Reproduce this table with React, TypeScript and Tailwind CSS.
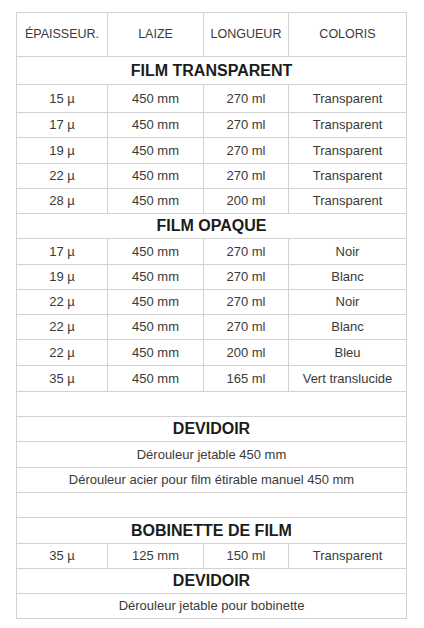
import React from "react";

type Row =
  | { kind: "data"; cells: [string, string, string, string]; h: number }
  | { kind: "title"; text: string; h: number }
  | { kind: "span"; text: string; h: number }
  | { kind: "empty"; h: number };

const rows: Row[] = [
  { kind: "title", text: "FILM TRANSPARENT", h: 28 },
  { kind: "data", cells: ["15 µ", "450 mm", "270 ml", "Transparent"], h: 28 },
  { kind: "data", cells: ["17 µ", "450 mm", "270 ml", "Transparent"], h: 25 },
  { kind: "data", cells: ["19 µ", "450 mm", "270 ml", "Transparent"], h: 26 },
  { kind: "data", cells: ["22 µ", "450 mm", "270 ml", "Transparent"], h: 25 },
  { kind: "data", cells: ["28 µ", "450 mm", "200 ml", "Transparent"], h: 25 },
  { kind: "title", text: "FILM OPAQUE", h: 25 },
  { kind: "data", cells: ["17 µ", "450 mm", "270 ml", "Noir"], h: 26 },
  { kind: "data", cells: ["19 µ", "450 mm", "270 ml", "Blanc"], h: 25 },
  { kind: "data", cells: ["22 µ", "450 mm", "270 ml", "Noir"], h: 25 },
  { kind: "data", cells: ["22 µ", "450 mm", "270 ml", "Blanc"], h: 25 },
  { kind: "data", cells: ["22 µ", "450 mm", "200 ml", "Bleu"], h: 26 },
  { kind: "data", cells: ["35 µ", "450 mm", "165 ml", "Vert translucide"], h: 26 },
  { kind: "empty", h: 25 },
  { kind: "title", text: "DEVIDOIR", h: 25 },
  { kind: "span", text: "Dérouleur jetable 450 mm", h: 26 },
  { kind: "span", text: "Dérouleur acier pour film étirable manuel 450 mm", h: 25 },
  { kind: "empty", h: 25 },
  { kind: "title", text: "BOBINETTE DE FILM", h: 26 },
  { kind: "data", cells: ["35 µ", "125 mm", "150 ml", "Transparent"], h: 25 },
  { kind: "title", text: "DEVIDOIR", h: 25 },
  { kind: "span", text: "Dérouleur jetable pour bobinette", h: 25 },
];

const cell = "border border-[#d2d2d2] text-center align-middle p-0";

export default function App() {
  return (
    <div
      className="w-[424px] h-[628px] bg-white pt-[12px] pl-[16px]"
      style={{ fontFamily: '"Liberation Sans", Arial, sans-serif' }}
    >
      <table className="border-collapse w-[390px] table-fixed text-[#3a3a3a] text-[13px]">
        <colgroup>
          <col className="w-[91px]" />
          <col className="w-[96px]" />
          <col className="w-[85px]" />
          <col className="w-[118px]" />
        </colgroup>
        <tbody>
          <tr className="h-[44px] text-[12.5px]">
            <td className={cell}>ÉPAISSEUR.</td>
            <td className={cell}>LAIZE</td>
            <td className={cell}>LONGUEUR</td>
            <td className={cell}>COLORIS</td>
          </tr>
          {rows.map((r, i) => {
            const style = { height: r.h };
            if (r.kind === "data")
              return (
                <tr key={i} style={style}>
                  {r.cells.map((c, j) => (
                    <td key={j} className={cell}>
                      {c}
                    </td>
                  ))}
                </tr>
              );
            if (r.kind === "title")
              return (
                <tr key={i} style={style}>
                  <td colSpan={4} className={`${cell} font-bold text-[16px] text-[#1c1c1c]`}>
                    {r.text}
                  </td>
                </tr>
              );
            if (r.kind === "span")
              return (
                <tr key={i} style={style}>
                  <td colSpan={4} className={cell}>
                    {r.text}
                  </td>
                </tr>
              );
            return (
              <tr key={i} style={style}>
                <td colSpan={4} className={cell}></td>
              </tr>
            );
          })}
        </tbody>
      </table>
    </div>
  );
}
